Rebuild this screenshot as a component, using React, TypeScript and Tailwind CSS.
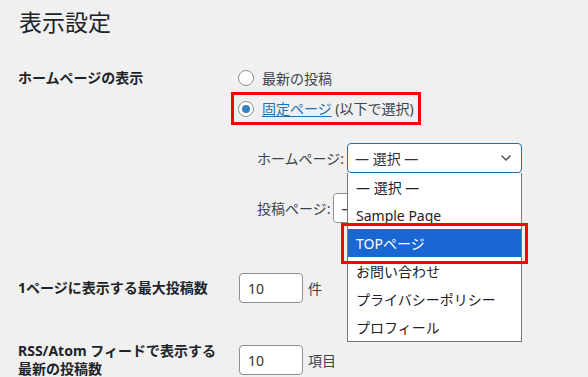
import { ChevronDown } from "lucide-react";

const font = {
  fontFamily: '"Noto Sans", "Noto Sans CJK JP", sans-serif',
};

function Radio({ checked }: { checked?: boolean }) {
  return (
    <span className="grid h-[16px] w-[16px] shrink-0 place-items-center rounded-full border border-[#8c8f94] bg-white">
      {checked && <span className="h-[8px] w-[8px] rounded-full bg-[#3582c4]" />}
    </span>
  );
}

function NumberInput({ unit }: { unit: string }) {
  return (
    <div className="flex items-center gap-[5px]">
      <div className="flex h-[30px] w-[64px] items-center rounded-[4px] border border-[#8c8f94] bg-white px-[8px] text-[14px] text-[#2c3338]">
        10
      </div>
      <span className="text-[14px] text-[#3c434a]">{unit}</span>
    </div>
  );
}

const pages = [
  "— 選択 —",
  "Sample Page",
  "TOPページ",
  "お問い合わせ",
  "プライバシーポリシー",
  "プロフィール",
];

export default function App() {
  return (
    <div
      className="relative h-[377px] w-[588px] overflow-hidden bg-[#f0f0f1] text-[#1d2327]"
      style={font}
    >
      <h1 className="pl-[19px] pt-[8px] text-[23px] font-normal leading-[29px]">
        表示設定
      </h1>

      {/* ホームページの表示 */}
      <div className="mt-[31px] flex">
        <div className="w-[231px] shrink-0 pl-[18px] text-[14px] font-bold leading-[20px]">
          ホームページの表示
        </div>
        <div className="flex flex-col">
          <label className="flex h-[20px] items-center gap-[8px] pl-[7px] text-[14px] text-[#3c434a]">
            <Radio />
            最新の投稿
          </label>
          <label className="mt-[4px] flex h-[33px] w-[190px] items-center gap-[8px] border-[3px] border-[#ff0000] pl-[4px] text-[14px] text-[#3c434a]">
            <Radio checked />
            <span>
              <a className="text-[#2271b1] underline underline-offset-2">固定ページ</a> (以下で選択)
            </span>
          </label>

          <div className="mt-[18px] flex h-[30px] items-center pl-[26px] text-[14px] text-[#3c434a]">
            <span>ホームページ:</span>
            <div className="ml-[3px] flex h-[30px] w-[175px] items-center justify-between rounded-[4px] border border-[#2271b1] bg-white pl-[7px] pr-[7px] text-[#2c3338]">
              <span>— 選択 —</span>
              <ChevronDown className="h-[16px] w-[16px] text-[#50575e]" strokeWidth={2.5} />
            </div>
          </div>

          <div className="mt-[20px] flex h-[30px] items-center pl-[26px] text-[14px] text-[#3c434a]">
            <span>投稿ページ:</span>
            <div className="ml-[3px] flex h-[30px] w-[175px] items-center rounded-[4px] border border-[#8c8f94] bg-white pl-[7px] text-[#2c3338]">
              — 選択 —
            </div>
          </div>
        </div>
      </div>

      {/* 1ページに表示する最大投稿数 */}
      <div className="mt-[50px] flex items-center">
        <div className="w-[239px] shrink-0 pl-[18px] text-[14px] font-bold leading-[20px]">
          1ページに表示する最大投稿数
        </div>
        <NumberInput unit="件" />
      </div>

      {/* RSS */}
      <div className="mt-[39px] flex items-center">
        <div className="w-[239px] shrink-0 pl-[18px] text-[14px] font-bold leading-[18px]">
          RSS/Atom フィードで表示する
          <br />
          最新の投稿数
        </div>
        <NumberInput unit="項目" />
      </div>

      {/* open dropdown */}
      <ul className="absolute left-[347px] top-[173px] w-[175px] border border-t-0 border-[#767676] bg-white text-[14px]">
        {pages.map((p) => (
          <li
            key={p}
            className={
              p === "TOPページ"
                ? "flex h-[28px] items-center bg-[#1967d2] px-[8px] text-white"
                : "flex h-[28px] items-center px-[8px] text-[#1d2327]"
            }
          >
            {p}
          </li>
        ))}
      </ul>

      {/* annotation */}
      <div className="pointer-events-none absolute left-[341px] top-[223px] h-[41px] w-[187px] border-[3px] border-[#ff0000]" />
    </div>
  );
}
